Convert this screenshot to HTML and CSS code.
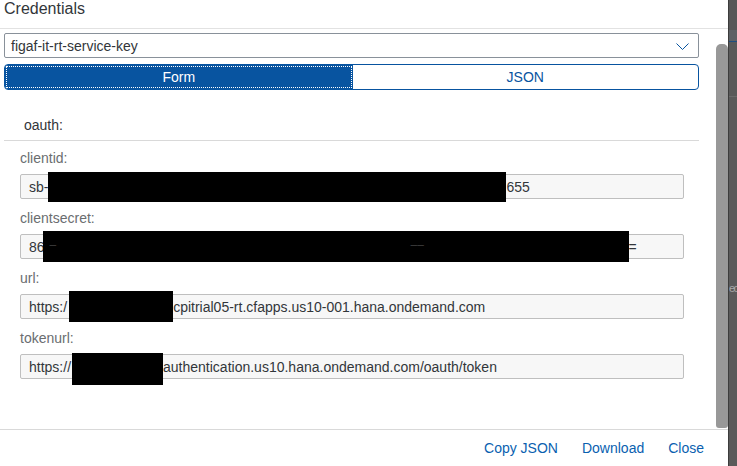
FILE: index.html
```html
<!DOCTYPE html>
<html lang="en">
<head>
  <meta charset="UTF-8">
  <title>Credentials</title>
  <link rel="stylesheet" href="styles.css">
</head>
<body>
  <div class="page">
    <div class="dialog">
      <header class="dialog-header">Credentials</header>
      <div class="dialog-body">
        <div class="scroll-content">
          <div class="select-box">
            <span>figaf-it-rt-service-key</span>
            <svg class="chevron" width="13" height="7" viewBox="0 0 13 7">
              <polyline points="0.5,0.5 6.5,6.5 12.5,0.5" fill="none" stroke="#0854a0" stroke-width="1"/>
            </svg>
          </div>
          <div class="tabs">
            <div class="tab tab-active"><span>Form</span></div>
            <div class="tab">JSON</div>
          </div>
          <div class="section-title">oauth:</div>
          <div class="fields">
            <div class="field">
              <label>clientid:</label>
              <div class="value">sb-<span class="redact redact-clientid"></span>655</div>
            </div>
            <div class="field">
              <label>clientsecret:</label>
              <div class="value">86<span class="redact redact-secret"><i class="ghost ghost-1">–</i><i class="ghost ghost-2">––</i></span>=</div>
            </div>
            <div class="field">
              <label>url:</label>
              <div class="value">https:/<span class="redact redact-url"></span>cpitrial05-rt.cfapps.us10-001.hana.ondemand.com</div>
            </div>
            <div class="field">
              <label>tokenurl:</label>
              <div class="value">https://<span class="redact redact-token"></span>authentication.us10.hana.ondemand.com/oauth/token</div>
            </div>
          </div>
        </div>
        <div class="scrollbar-track">
          <div class="scrollbar-thumb"></div>
        </div>
      </div>
      <footer class="dialog-footer">
        <a href="#">Copy JSON</a>
        <a href="#">Download</a>
        <a href="#">Close</a>
      </footer>
    </div>
    <div class="backdrop">
      <div class="bd-top"></div>
      <div class="bd-bar"></div>
      <div class="bd-mid"></div>
      <div class="bd-rest"><span class="bd-text">ec</span></div>
    </div>
  </div>
</body>
</html>
```

FILE: styles.css
```css
body {
  margin: 0;
  background-color: #595959;
  font-family: "Liberation Sans", Arial, sans-serif;
  font-size: 14px;
  color: #32363a;
}
.page {
  display: flex;
  height: 466px;
  overflow: hidden;
}
.dialog {
  width: 728px;
  flex: none;
  background-color: #fff;
  display: flex;
  flex-direction: column;
}
.dialog-header {
  height: 28px;
  padding-left: 4px;
  font-size: 16px;
  line-height: 17px;
  color: #32363a;
  border-bottom: 1px solid #e2e2e2;
}
.dialog-body {
  flex: 1;
  display: flex;
  min-height: 0;
}
.scroll-content {
  flex: 1;
  padding: 4px 17px 0 4px;
}
.select-box {
  height: 25px;
  box-sizing: border-box;
  border: 1px solid #89919a;
  border-radius: 2px;
  display: flex;
  align-items: center;
  justify-content: space-between;
  padding: 0 9px 0 6px;
}
.chevron {
  margin-top: 1px;
}
.tabs {
  display: flex;
  margin-top: 6px;
  height: 26px;
  box-sizing: border-box;
  border: 1px solid #0854a0;
  border-radius: 4px;
  overflow: hidden;
}
.tab {
  flex: 1;
  display: flex;
  align-items: center;
  justify-content: center;
  color: #0854a0;
}
.tab-active {
  background-color: #0854a0;
  color: #fff;
  padding: 1px;
}
.tab-active span {
  flex: 1;
  align-self: stretch;
  display: flex;
  align-items: center;
  justify-content: center;
  border: 1px dotted #fff;
}
.section-title {
  margin-top: 26px;
  padding: 0 0 6px 20px;
  line-height: 18px;
  border-bottom: 1px solid #d9d9d9;
}
.fields {
  padding: 8px 15px 0 16px;
}
.field {
  margin-bottom: 10px;
}
.field label {
  display: block;
  line-height: 18px;
  color: #6a6d70;
  margin-bottom: 7px;
}
.value {
  height: 25px;
  box-sizing: border-box;
  border: 1px solid #bfbfbf;
  border-radius: 2px;
  background-color: #f7f7f7;
  display: flex;
  align-items: center;
  padding-left: 8px;
  white-space: nowrap;
}
.redact {
  flex: none;
  position: relative;
  background-color: #000;
  height: 30px;
}
.redact-clientid {
  width: 458px;
}
.redact-secret {
  width: 586px;
  height: 31px;
  margin-left: -2px;
}
.redact-url {
  width: 104px;
  margin-left: 2px;
  height: 31px;
}
.redact-token {
  width: 91px;
  margin-left: 1px;
  height: 32px;
  margin-top: 4px;
}
.ghost {
  position: absolute;
  top: 7px;
  font-style: normal;
  color: #3a3a3a;
  font-size: 12px;
}
.ghost-1 {
  left: 7px;
}
.ghost-2 {
  left: 368px;
}
.scrollbar-track {
  width: 12px;
  padding: 15px 0 1px;
  box-sizing: border-box;
  display: flex;
}
.scrollbar-thumb {
  flex: 1;
  background-color: #989898;
  border-radius: 5px 5px 3px 3px;
}
.dialog-footer {
  height: 36px;
  border-top: 1px solid #d9d9d9;
  display: flex;
  align-items: center;
  justify-content: flex-end;
  gap: 24px;
  padding-right: 24px;
}
.dialog-footer a {
  color: #0a5fb0;
  text-decoration: none;
}
.backdrop {
  flex: 1;
  display: flex;
  flex-direction: column;
  border-left: 1px solid #3c3c3c;
}
.bd-top {
  height: 30px;
  background-color: #575757;
}
.bd-bar {
  height: 11px;
  background-color: #5d6165;
  border-bottom: 1px solid #1f4d80;
}
.bd-mid {
  height: 54px;
  background-color: #595959;
  border-bottom: 1px solid #6a6a6a;
}
.bd-rest {
  flex: 1;
  background-color: #5a5a5a;
  padding-top: 185px;
  overflow: hidden;
}
.bd-text {
  display: block;
  color: #a8a8a8;
  font-size: 11px;
  letter-spacing: -1.5px;
}
```
